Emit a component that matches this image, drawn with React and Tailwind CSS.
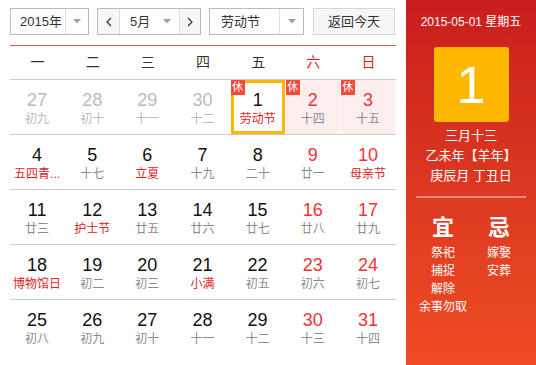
import React from "react";

const F = { fontFamily: '"Liberation Sans", "Noto Sans CJK SC", sans-serif' };

const Tri = () => (
  <svg width="8" height="5" viewBox="0 0 8 5"><path d="M0 0h8L4 4.5z" fill="#a0a0a0" /></svg>
);

const rows = [
  [
    { d: 27, l: "初九", prev: true },
    { d: 28, l: "初十", prev: true },
    { d: 29, l: "十一", prev: true },
    { d: 30, l: "十二", prev: true },
    { d: 1, l: "劳动节", fest: true, rest: true, today: true },
    { d: 2, l: "十四", rest: true },
    { d: 3, l: "十五", rest: true },
  ],
  [
    { d: 4, l: "五四青...", fest: true },
    { d: 5, l: "十七" },
    { d: 6, l: "立夏", fest: true },
    { d: 7, l: "十九" },
    { d: 8, l: "二十" },
    { d: 9, l: "廿一" },
    { d: 10, l: "母亲节", fest: true },
  ],
  [
    { d: 11, l: "廿三" },
    { d: 12, l: "护士节", fest: true },
    { d: 13, l: "廿五" },
    { d: 14, l: "廿六" },
    { d: 15, l: "廿七" },
    { d: 16, l: "廿八" },
    { d: 17, l: "廿九" },
  ],
  [
    { d: 18, l: "博物馆日", fest: true },
    { d: 19, l: "初二" },
    { d: 20, l: "初三" },
    { d: 21, l: "小满", fest: true },
    { d: 22, l: "初五" },
    { d: 23, l: "初六" },
    { d: 24, l: "初七" },
  ],
  [
    { d: 25, l: "初八" },
    { d: 26, l: "初九" },
    { d: 27, l: "初十" },
    { d: 28, l: "十一" },
    { d: 29, l: "十二" },
    { d: 30, l: "十三" },
    { d: 31, l: "十四" },
  ],
];

function Cell({ c, col }) {
  const weekend = col >= 5;
  let numColor = "text-[#111]";
  if (c.prev) numColor = "text-[#bbbbbb]";
  else if (weekend) numColor = "text-[#ee3333]";
  let lunColor = "text-[#8c8c8c]";
  if (c.prev) lunColor = "text-[#bbbbbb]";
  else if (c.fest) lunColor = "text-[#e22222]";
  let box = "";
  if (c.today) box = "border-[3px] border-[#ffb600] bg-white pt-[6px]";
  else if (c.rest) box = "bg-[#fdeeee] pt-[9px]";
  else box = "pt-[9px]";
  return (
    <div className="relative h-[54px] pr-[1px]">
      <div className={`flex h-full flex-col items-center ${box}`}>
        <div className={`text-[18px] leading-[22px] ${numColor}`}>{c.d}</div>
        <div className={`text-[12px] leading-[16px] whitespace-nowrap ${lunColor}`}>{c.l}</div>
      </div>
      {c.rest && (
        <div className="absolute left-0 top-0 flex h-[15px] w-[14px] items-center justify-center bg-[#f5483b] text-[11px] leading-none text-white">
          休
        </div>
      )}
    </div>
  );
}

export default function App() {
  const heads = ["一", "二", "三", "四", "五", "六", "日"];
  return (
    <div className="flex h-[365px] w-[536px] bg-white" style={F}>
      <div className="w-[406px] px-[10px] pt-[8px]">
        <div className="flex h-[27px] items-stretch text-[13px] text-[#333]">
          <div className="flex w-[79px] border border-[#bbb]">
            <div className="flex flex-1 items-center pl-[9px]">2015年</div>
            <div className="flex w-[23px] items-center justify-center border-l border-[#ddd]"><Tri /></div>
          </div>
          <div className="ml-[8px] flex w-[104px] border border-[#bbb]">
            <div className="flex w-[22px] items-center justify-center border-r border-[#ddd] bg-[#f6f6f6] text-[#555]">
              <svg width="6" height="10" viewBox="0 0 6 10"><path d="M5 1L1 5l4 4" fill="none" stroke="#333" strokeWidth="1.2" /></svg>
            </div>
            <div className="flex flex-1 items-center pl-[10px]">
              <span className="flex-1">5月</span>
              <span className="mr-[8px] flex"><Tri /></span>
            </div>
            <div className="flex w-[21px] items-center justify-center border-l border-[#ddd] bg-[#f6f6f6]">
              <svg width="6" height="10" viewBox="0 0 6 10"><path d="M1 1l4 4-4 4" fill="none" stroke="#333" strokeWidth="1.2" /></svg>
            </div>
          </div>
          <div className="ml-[8px] flex w-[95px] border border-[#bbb]">
            <div className="flex flex-1 items-center pl-[11px]">劳动节</div>
            <div className="flex w-[24px] items-center justify-center border-l border-[#ddd]"><Tri /></div>
          </div>
          <div className="ml-[9px] flex w-[82px] items-center justify-center border border-[#d6d6d6] bg-[#f6f6f6]">
            返回今天
          </div>
        </div>
        <div className="mt-[10px] border-t border-[#e8533c]">
          <div className="grid h-[34px] grid-cols-7 items-center border-b border-[#cccccc] text-[14px]">
            {heads.map((h, i) => (
              <div key={h} className={`text-center ${i >= 5 ? "text-[#e22222]" : "text-[#333]"}`}>{h}</div>
            ))}
          </div>
          {rows.map((r, ri) => (
            <div key={ri} className={`grid grid-cols-7 ${ri < 4 ? "border-b border-[#cccccc]" : ""}`}>
              {r.map((c, ci) => (
                <Cell key={ci} c={c} col={ci} />
              ))}
            </div>
          ))}
        </div>
      </div>
      <div className="flex h-[365px] w-[130px] flex-col items-center bg-linear-to-b from-[#c91d1d] to-[#ef4c24] text-white">
        <div className="mt-[15px] text-[12px] leading-[14px]">2015-05-01 星期五</div>
        <div className="mt-[18px] flex h-[75px] w-[75px] items-center justify-center rounded-[3px] bg-[#ffb800] text-[52px] leading-none">
          1
        </div>
        <div className="mt-[4px] flex flex-col items-center text-[13px] leading-[20px]">
          <div>三月十三</div>
          <div>乙未年【羊年】</div>
          <div>庚辰月 丁丑日</div>
        </div>
        <div className="mt-[10px] h-[2px] w-[110px] bg-[#ee8a7a]" />
        <div className="mt-[17px] flex w-[112px] justify-between text-[12px] leading-[18px]">
          <div className="flex w-[56px] flex-col items-center">
            <div className="mb-[3px] text-[22px] font-bold leading-[26px]">宜</div>
            <div>祭祀</div>
            <div>捕捉</div>
            <div>解除</div>
            <div className="whitespace-nowrap">余事勿取</div>
          </div>
          <div className="flex w-[56px] flex-col items-center">
            <div className="mb-[3px] text-[22px] font-bold leading-[26px]">忌</div>
            <div>嫁娶</div>
            <div>安葬</div>
          </div>
        </div>
      </div>
    </div>
  );
}
